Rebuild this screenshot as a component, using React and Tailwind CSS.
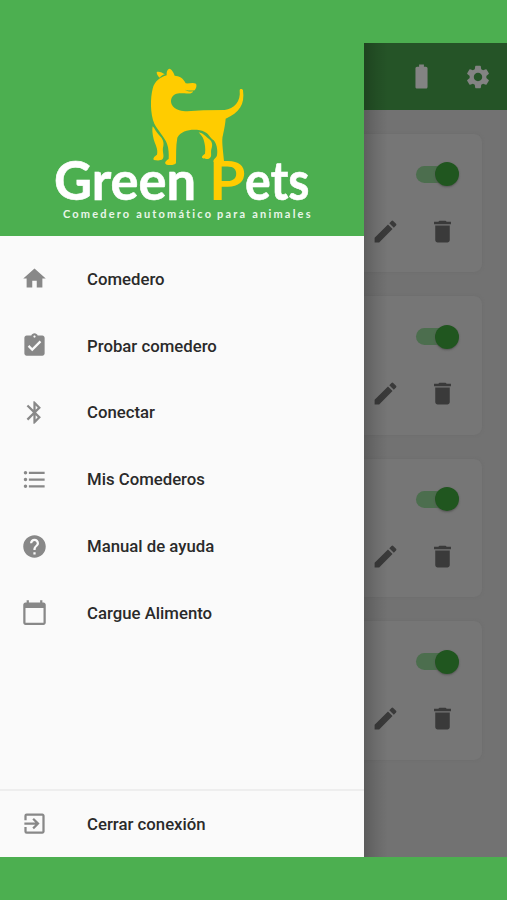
import {
  MdAssignmentTurnedIn,
  MdBatteryFull,
  MdBluetooth,
  MdCalendarToday,
  MdDelete,
  MdEdit,
  MdExitToApp,
  MdFormatListBulleted,
  MdHelp,
  MdHome,
  MdSettings,
} from "react-icons/md";

const menu = [
  { label: "Comedero", Icon: MdHome },
  { label: "Probar comedero", Icon: MdAssignmentTurnedIn },
  { label: "Conectar", Icon: MdBluetooth },
  { label: "Mis Comederos", Icon: MdFormatListBulleted },
  { label: "Manual de ayuda", Icon: MdHelp },
  { label: "Cargue Alimento", Icon: MdCalendarToday },
];

function Logo() {
  return (
    <svg viewBox="0 43 364 193" className="block h-[193px] w-[364px] shrink-0 bg-[#4caf50]">
      {/* perro */}
      <g transform="translate(140 60) scale(0.33333)" fill="#ffcc00">
        <path d="M50 36C57 33 67 38 75 43C67 45 62 49 60 53C54 50 50 43 50 36Z" />
        <path d="M80 46C79 36 82 28 88 26C95 27 101 37 104 47C116 48 130 53 137 70C148 71 159 67 168 71C172 80 166 87 164 91C156 92 145 92 134 89C143 94 151 95 159 94C156 104 142 100 133 100C118 100 104 99 96 112C88 126 96 145 118 151C137 157 165 152 190 151L254 150C282 147 303 126 299 91C299 86 307 85 309 91C315 134 298 158 257 176C255 199 251 213 249 225C244 240 249 267 252 304L220 305C221 295 229 295 231 286C234 269 229 249 221 241C209 232 205 219 193 215C170 205 125 207 112 233C107 260 109 286 108 309C105 316 89 316 80 314C70 309 79 301 86 297C87 281 86 265 81 251C75 232 53 211 43 191C30 160 31 113 38 86C43 64 62 51 80 46Z" />
        <path d="M38 199C44 205 49 218 57 225C69 236 72 247 70 258C65 275 75 288 68 297C62 303 49 301 42 300C37 295 45 288 51 284C55 267 45 253 41 238C37 221 36 209 38 199Z" />
        <path d="M176 217C190 219 196 230 206 236C220 246 217 258 214 268C211 281 218 290 207 296C199 298 190 296 187 294C184 288 190 285 195 281C197 265 195 253 191 239C188 230 182 225 176 217Z" />
      </g>
      <g className="font-['Lato']" fontWeight="700">
        <text x="54" y="200" fontSize="53" fill="#fff" stroke="#fff" strokeWidth="0.6" textLength="142" lengthAdjust="spacingAndGlyphs">Green</text>
        <text x="209" y="200" fontSize="53" fill="#ffcc00" textLength="36.5" lengthAdjust="spacingAndGlyphs">P</text>
        <text x="245" y="200" fontSize="53" fill="#fff" stroke="#fff" strokeWidth="0.6" textLength="64.5" lengthAdjust="spacingAndGlyphs">ets</text>
      </g>
      <g className="font-['Lato'] [font-variant-ligatures:none]" fontWeight="700" fontSize="11" fill="#e9f6e9">
        <text x="63" y="217.5" textLength="148">Comedero automático</text>
        <text x="217" y="217.5" textLength="93.5">para animales</text>
      </g>
    </svg>
  );
}

function MenuItem({ label, Icon }) {
  return (
    <button className="flex h-[66.9px] w-full shrink-0 items-center pl-[21px] text-left">
      <Icon className="size-[27px] text-[#888888]" />
      <span className="ml-[39px] pt-[1.5px] text-[16.75px] font-medium text-[#2a2a2a]">{label}</span>
    </button>
  );
}

function Drawer() {
  return (
    <aside className="flex w-[364px] shrink-0 flex-col bg-[#fafafa]">
      <Logo />
      <nav className="flex flex-1 flex-col pt-[9px]">
        {menu.map((item) => (
          <MenuItem key={item.label} {...item} />
        ))}
      </nav>
      <div className="h-[68px] border-t-2 border-[#eeeeee]">
        <MenuItem label="Cerrar conexión" Icon={MdExitToApp} />
      </div>
    </aside>
  );
}

function FeederCard() {
  return (
    <div className="mb-[24px] h-[138.6px] w-[118px] shrink-0 rounded-r-lg bg-[#767676] shadow-[0_0_3px_#6c6c6c]">
      {/* switch */}
      <div className="flex justify-end pt-[28.5px] pr-[23px]">
        <div className="flex h-6 w-[43px] items-center">
          <div className="h-[17px] w-9 rounded-full bg-[#4c6e4e]" />
          <div className="-ml-[17px] size-6 shrink-0 rounded-full bg-[#20561f] shadow-[0_1px_2px_#555]" />
        </div>
      </div>
      <div className="mt-[30.5px] flex items-center pl-[6.5px] text-[#3a3a3a]">
        <MdEdit className="size-[29px]" />
        <MdDelete className="ml-[28.5px] size-[29px]" />
      </div>
    </div>
  );
}

export default function App() {
  return (
    <main className="flex h-[900px] w-[507px] flex-col overflow-hidden bg-[#4caf50] py-[43px] font-['Roboto',sans-serif]">
      <div className="flex h-[813.5px] shrink-0">
        <Drawer />
        <section className="relative flex flex-1 flex-col overflow-hidden bg-[#727272]">
          <header className="flex h-[67px] shrink-0 items-center bg-[#255427] pl-[42.5px] text-[#838383]">
            <MdBatteryFull className="size-[29px]" />
            <MdSettings className="ml-[28.5px] size-[28px]" />
          </header>
          <div className="flex flex-col pt-[23.5px]">
            <FeederCard />
            <FeederCard />
            <FeederCard />
            <FeederCard />
          </div>
          {/* sombra del menu lateral */}
          <div className="absolute inset-y-0 left-0 w-6 bg-linear-to-r from-black/20 via-black/8 to-transparent" />
        </section>
      </div>
    </main>
  );
}
